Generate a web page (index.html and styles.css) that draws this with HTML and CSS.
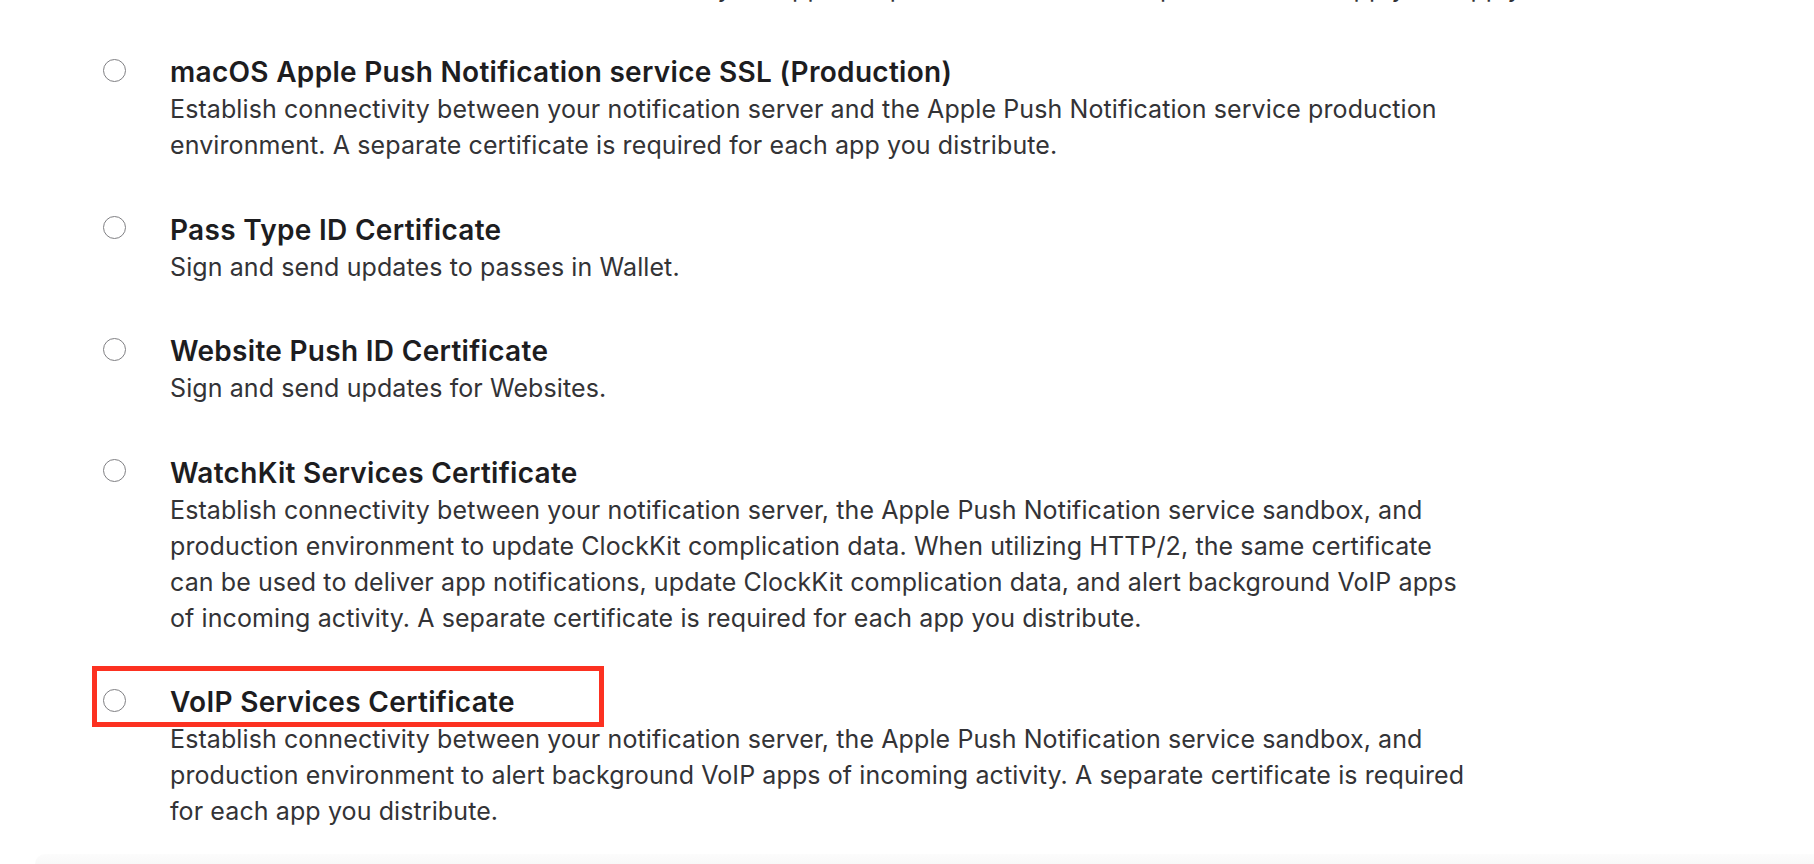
FILE: index.html
```html
<!DOCTYPE html>
<html lang="en">
<head>
<meta charset="utf-8">
<title>Certificates</title>
<link rel="stylesheet" href="styles.css">
</head>
<body>
<main class="page">
  <div class="list">
    <div class="item item-partial">
      <p class="desc">environment to deliver remote notifications to your app. A separate certificate is required for each app you supply.</p>
    </div>

    <div class="item">
      <div class="head"><span class="radio"></span><h3 class="title">macOS Apple Push Notification service SSL (Production)</h3></div>
      <p class="desc">Establish connectivity between your notification server and the Apple Push Notification service production<br>environment. A separate certificate is required for each app you distribute.</p>
    </div>

    <div class="item">
      <div class="head"><span class="radio"></span><h3 class="title">Pass Type ID Certificate</h3></div>
      <p class="desc">Sign and send updates to passes in Wallet.</p>
    </div>

    <div class="item">
      <div class="head"><span class="radio"></span><h3 class="title">Website Push ID Certificate</h3></div>
      <p class="desc">Sign and send updates for Websites.</p>
    </div>

    <div class="item">
      <div class="head"><span class="radio"></span><h3 class="title">WatchKit Services Certificate</h3></div>
      <p class="desc">Establish connectivity between your notification server, the Apple Push Notification service sandbox, and<br>production environment to update ClockKit complication data. When utilizing HTTP/2, the same certificate<br>can be used to deliver app notifications, update ClockKit complication data, and alert background VoIP apps<br>of incoming activity. A separate certificate is required for each app you distribute.</p>
    </div>

    <div class="item">
      <div class="head head-marked"><span class="radio"></span><h3 class="title">VoIP Services Certificate</h3><span class="mark"></span></div>
      <p class="desc">Establish connectivity between your notification server, the Apple Push Notification service sandbox, and<br>production environment to alert background VoIP apps of incoming activity. A separate certificate is required<br>for each app you distribute.</p>
    </div>
  </div>
  <div class="footer-band"></div>
</main>
</body>
</html>
```
FILE: styles.css
```css
html, body {
  margin: 0;
  padding: 0;
  background: #ffffff;
}

body {
  font-family: "Inter", "Noto Sans", "Liberation Sans", sans-serif;
  color: #1d1d1f;
  overflow: hidden;
}

.page {
  display: flex;
  flex-direction: column;
  height: 864px;
}

.list {
  display: flex;
  flex-direction: column;
  gap: 47.5px;
  padding-left: 103px;
  margin-top: -30.5px;
}

.item {
  display: flex;
  flex-direction: column;
}

.head {
  display: flex;
  align-items: center;
  gap: 44px;
}

.head-marked {
  position: relative;
}

.radio {
  flex: none;
  width: 23px;
  height: 23px;
  box-sizing: border-box;
  border: 1.6px solid #7f7f83;
  border-radius: 50%;
  background: #fff;
  margin-bottom: 4px;
}

.title {
  margin: 0;
  font-size: 28px;
  line-height: 38px;
  font-weight: 600;
  letter-spacing: 0.3px;
  color: #1d1d1f;
  white-space: nowrap;
}

.desc {
  margin: 0 0 0 67px;
  font-size: 25px;
  line-height: 36px;
  font-weight: 400;
  letter-spacing: 0.1px;
  color: #333336;
  white-space: nowrap;
}

.mark {
  position: absolute;
  left: -11px;
  top: -17px;
  width: 512px;
  height: 61px;
  box-sizing: border-box;
  border: 5px solid #fc3121;
  pointer-events: none;
}

.footer-band {
  margin-top: auto;
  margin-left: 35px;
  height: 10px;
  background: linear-gradient(#fcfcfc, #f8f8f8);
  border-top-left-radius: 14px;
}
```
